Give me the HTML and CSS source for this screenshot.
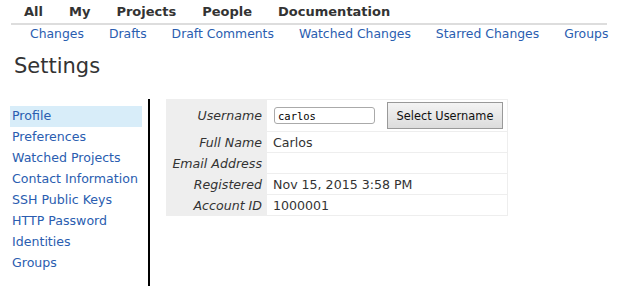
FILE: index.html
```html
<!DOCTYPE html>
<html>
<head>
<meta charset="utf-8">
<link rel="stylesheet" href="styles.css">
</head>
<body>
<div class="topmenu">
  <span class="tm">All</span>
  <span class="tm">My</span>
  <span class="tm">Projects</span>
  <span class="tm">People</span>
  <span class="tm">Documentation</span>
</div>
<div class="submenu">
  <a class="sm">Changes</a>
  <a class="sm">Drafts</a>
  <a class="sm">Draft Comments</a>
  <a class="sm">Watched Changes</a>
  <a class="sm">Starred Changes</a>
  <a class="sm">Groups</a>
</div>
<h1 class="title">Settings</h1>
<div class="main">
  <div class="side">
    <a class="item active">Profile</a>
    <a class="item">Preferences</a>
    <a class="item">Watched Projects</a>
    <a class="item">Contact Information</a>
    <a class="item">SSH Public Keys</a>
    <a class="item">HTTP Password</a>
    <a class="item">Identities</a>
    <a class="item">Groups</a>
  </div>
  <div class="content">
    <table class="info">
      <tr class="first">
        <th>Username</th>
        <td><div class="urow"><input class="uinput" value="carlos"><button class="btn">Select Username</button></div></td>
      </tr>
      <tr><th>Full Name</th><td>Carlos</td></tr>
      <tr><th>Email Address</th><td></td></tr>
      <tr><th>Registered</th><td>Nov 15, 2015 3:58 PM</td></tr>
      <tr><th>Account ID</th><td>1000001</td></tr>
    </table>
  </div>
</div>
</body>
</html>
```
FILE: styles.css
```css
html, body {
  overflow: hidden;
}
body {
  margin: 0;
  font-family: "DejaVu Sans", sans-serif;
  font-size: 12.6px;
  color: #333;
  background: #fff;
}
.topmenu {
  margin: 0 30px 0 11px;
  padding: 4px 0 0 13px;
  height: 19px;
  border-bottom: 2px solid #ddd;
  display: flex;
  gap: 26px;
}
.tm {
  font-weight: bold;
  font-size: 13px;
  line-height: 16px;
  color: #333;
}
.submenu {
  display: flex;
  gap: 25px;
  padding-left: 30px;
  height: 20px;
  line-height: 18px;
}
.sm {
  color: #2a5db0;
  font-size: 12.4px;
}
.title {
  margin: 8px 0 0 14px;
  font-size: 21px;
  font-weight: normal;
  line-height: 26px;
  color: #333;
}
.main {
  display: flex;
  margin-top: 20px;
}
.side {
  box-sizing: border-box;
  width: 150px;
  padding: 7px 0 0 10px;
  border-right: 2px solid #000;
  height: 187px;
  display: flex;
  flex-direction: column;
}
.item {
  display: block;
  width: 130px;
  padding-left: 2px;
  height: 21px;
  line-height: 20px;
  color: #2a5db0;
}
.item.active {
  background: #d8edf9;
}
.content {
  padding-left: 16px;
}
.info {
  border-collapse: collapse;
  width: 342px;
  border: 1px solid #eee;
}
.info th {
  background: #eee;
  font-weight: normal;
  font-style: italic;
  text-align: right;
  width: 95px;
  padding: 0 5px 0 0;
  height: 20px;
  color: #333;
  border-bottom: 1px solid #eee;
}
.info td {
  padding: 0 0 0 6px;
  height: 20px;
  border-bottom: 1px solid #eee;
  color: #333;
}
.info tr.first th, .info tr.first td {
  height: 31px;
}
.urow {
  display: flex;
  align-items: center;
  gap: 12px;
  margin-left: 1px;
}
.uinput {
  width: 101px;
  height: 17px;
  box-sizing: border-box;
  border: 1px solid #aaa;
  border-radius: 3px;
  padding: 0 3px;
  font-family: "DejaVu Sans Mono", monospace;
  font-size: 10.5px;
  color: #000;
}
.btn {
  width: 116px;
  height: 27px;
  border: 1px solid #999;
  border-radius: 0;
  background: linear-gradient(#f4f4f4, #dcdcdc);
  font-family: "DejaVu Sans", sans-serif;
  font-size: 11.4px;
  color: #111;
  padding: 0;
}
```
